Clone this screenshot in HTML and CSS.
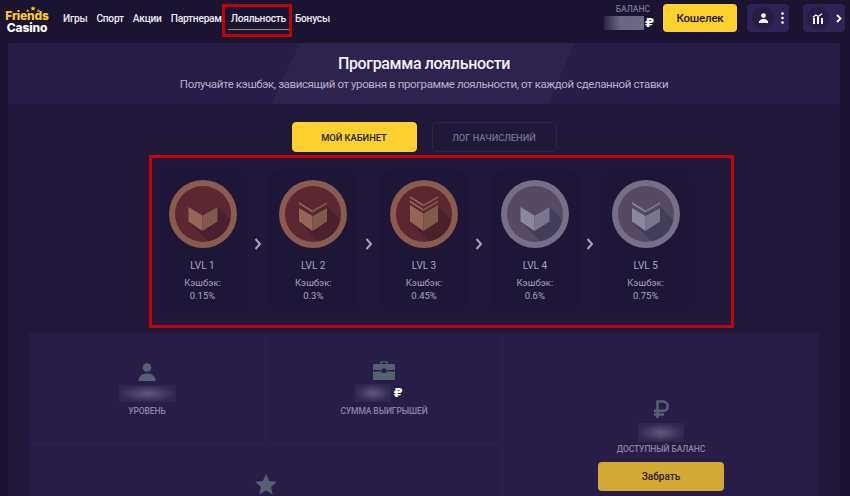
FILE: index.html
```html
<!DOCTYPE html>
<html lang="ru">
<head>
  <meta charset="UTF-8" />
  <title>Friends Casino</title>
  <link rel="stylesheet" href="styles.css">
</head>
<body>
  <svg class="sprite" aria-hidden="true">
    <defs>
      <clipPath id="face-clip"><circle r="28"/></clipPath>
      <symbol id="badge-base" viewBox="-34 -34 68 68">
        <circle class="rim" r="34"/>
        <circle class="face" r="28"/>
        <polygon class="shade" points="14.5,-7 42,20 20,42 -14.5,7.5" clip-path="url(#face-clip)"/>
      </symbol>
    </defs>
  </svg>

  <header class="topbar">
    <a class="logo">
      <svg class="logo-stars" viewBox="0 0 24 9"><path d="M4 5l.7 1.5 1.6.2-1.2 1 .3 1.3-1.4-.8-1.4.8.3-1.3-1.2-1 1.6-.2zM12 0l1.1 2.4 2.6.3-1.9 1.8.5 2.5-2.3-1.3-2.3 1.3.5-2.5-1.9-1.8 2.6-.3zM20 5l.7 1.5 1.6.2-1.2 1 .3 1.3-1.4-.8-1.4.8.3-1.3-1.2-1 1.6-.2z"/></svg>
      <span class="logo-top">Friends</span>
      <span class="logo-bottom">Casino</span>
    </a>
    <nav class="nav">
      <a>Игры</a>
      <a>Спорт</a>
      <a>Акции</a>
      <a>Партнерам</a>
      <a class="active">Лояльность</a>
      <a>Бонусы</a>
    </nav>
    <div class="balance">
      <span class="balance-label">БАЛАНС</span>
      <span class="balance-value"><i class="blur blur-head"></i><b class="rub">₽</b></span>
    </div>
    <button class="wallet">Кошелек</button>
    <button class="square-btn">
      <span class="round">
        <svg width="11" height="10" viewBox="0 0 11 10"><circle cx="5.5" cy="2.6" r="2.4"/><path d="M.8 10c0-2.8 2-4 4.700-4s4.700 1.200 4.700 4z"/></svg>
      </span>
      <svg class="more" width="3" height="12" viewBox="0 0 3 12"><circle cx="1.500" cy="1.500" r="1.300"/><circle cx="1.500" cy="6" r="1.300"/><circle cx="1.500" cy="10.500" r="1.300"/></svg>
    </button>
    <button class="square-btn last">
      <span class="round">
        <svg width="12" height="11" viewBox="0 0 12 11"><path d="M1 5h2v6H1zM5 4h2v7H5zM9 5h2v6H9z"/><path class="line" d="M.8 4.500 3.800 2l2.400 1.400L10 .8"/></svg>
      </span>
      <svg class="chev" width="6" height="9" viewBox="0 0 6 9"><path d="M1 1l3.500 3.500L1 8"/></svg>
    </button>
    <span class="mark mark-nav"></span>
  </header>

  <main class="page">
    <section class="hero">
      <h1>Программа лояльности</h1>
      <p>Получайте кэшбэк, зависящий от уровня в программе лояльности, от каждой сделанной ставки</p>
    </section>

    <div class="tabs">
      <button class="tab tab-on">МОЙ КАБИНЕТ</button>
      <button class="tab">ЛОГ НАЧИСЛЕНИЙ</button>
    </div>

    <section class="levels">
      <span class="mark mark-levels"></span>

      <article class="level bronze">
        <svg class="badge" viewBox="-34 -34 68 68">
          <use href="#badge-base" x="-34" y="-34" width="68" height="68"/>
          <path class="sh-l" d="M-14.500-7-.5 1.500V17L-14.500 7.500z"/>
          <path class="sh-r" d="M14.500-7-.5 1.500V17L14.500 7.500z"/>
        </svg>
        <h3>LVL 1</h3>
        <p>Кэшбэк:<br>0.15%</p>
      </article>
      <svg class="next" width="8" height="12" viewBox="0 0 8 12"><path d="M1.500 1l4.500 5-4.500 5"/></svg>

      <article class="level bronze">
        <svg class="badge" viewBox="-34 -34 68 68">
          <use href="#badge-base" x="-34" y="-34" width="68" height="68"/>
          <path class="sh-l" d="M-14-12-.5-3.500V-1.500L-14-10zM-14-6-.5 2V17L-14 7.500z"/>
          <path class="sh-r" d="M14-12-.5-3.500V-1.500L14-10zM14-6-.5 2V17L14 7.500z"/>
        </svg>
        <h3>LVL 2</h3>
        <p>Кэшбэк:<br>0.3%</p>
      </article>
      <svg class="next" width="8" height="12" viewBox="0 0 8 12"><path d="M1.500 1l4.500 5-4.500 5"/></svg>

      <article class="level bronze">
        <svg class="badge" viewBox="-34 -34 68 68">
          <use href="#badge-base" x="-34" y="-34" width="68" height="68"/>
          <path class="sh-l" d="M-14-18-.5-9.500V-7.500L-14-16zM-14-13.500-.5-5V-3L-14-11.500zM-14-9-.5-.5V17L-14 7.500z"/>
          <path class="sh-r" d="M14-18-.5-9.500V-7.500L14-16zM14-13.500-.5-5V-3L14-11.500zM14-9-.5-.5V17L14 7.500z"/>
        </svg>
        <h3>LVL 3</h3>
        <p>Кэшбэк:<br>0.45%</p>
      </article>
      <svg class="next" width="8" height="12" viewBox="0 0 8 12"><path d="M1.500 1l4.500 5-4.500 5"/></svg>

      <article class="level silver">
        <svg class="badge" viewBox="-34 -34 68 68">
          <use href="#badge-base" x="-34" y="-34" width="68" height="68"/>
          <path class="sh-l" d="M-14.500-7-.5 1.500V17L-14.500 7.500z"/>
          <path class="sh-r" d="M14.500-7-.5 1.500V17L14.500 7.500z"/>
        </svg>
        <h3>LVL 4</h3>
        <p>Кэшбэк:<br>0.6%</p>
      </article>
      <svg class="next" width="8" height="12" viewBox="0 0 8 12"><path d="M1.500 1l4.500 5-4.500 5"/></svg>

      <article class="level silver">
        <svg class="badge" viewBox="-34 -34 68 68">
          <use href="#badge-base" x="-34" y="-34" width="68" height="68"/>
          <path class="sh-l" d="M-14-12-.5-3.500V-1.500L-14-10zM-14-6-.5 2V17L-14 7.500z"/>
          <path class="sh-r" d="M14-12-.5-3.500V-1.500L14-10zM14-6-.5 2V17L14 7.500z"/>
        </svg>
        <h3>LVL 5</h3>
        <p>Кэшбэк:<br>0.75%</p>
      </article>
    </section>

    <section class="stats">
      <div class="stat stat-a">
        <svg class="icon" width="18" height="18" viewBox="0 0 18 18"><circle cx="9" cy="4.500" r="4.300"/><path d="M.5 18c0-5 3.500-7.500 8.500-7.500s8.500 2.500 8.500 7.500z"/></svg>
        <i class="blur blur-level"></i>
        <span class="stat-label">УРОВЕНЬ</span>
      </div>
      <div class="stat stat-b">
        <svg class="icon" width="22" height="19" viewBox="0 0 22 19"><path d="M7 3V1.500A1.300 1.300 0 0 1 8.300.2h5.400A1.300 1.300 0 0 1 15 1.500V3h-1.400V1.600H8.400V3z"/><path d="M1.500 3h19A1.500 1.500 0 0 1 22 4.500V9H13V7.500H9V9H0V4.500A1.500 1.500 0 0 1 1.500 3zM0 10.500h9V12h4v-1.500h9v7A1.500 1.500 0 0 1 20.500 19h-19A1.500 1.500 0 0 1 0 17.500z"/></svg>
        <span class="stat-value"><i class="blur blur-sum"></i><b class="rub">₽</b></span>
        <span class="stat-label">СУММА ВЫИГРЫШЕЙ</span>
      </div>
      <div class="stat stat-c">
        <svg class="icon" width="22" height="21" viewBox="0 0 22 21"><path d="M11 0l3.200 7 7.600.8-5.700 5.100 1.600 7.500L11 16.600l-6.700 3.800 1.600-7.500L.2 7.800 7.800 7z"/></svg>
      </div>
      <div class="stat stat-d">
        <svg class="icon-rub" width="16" height="19" viewBox="0 0 16 19"><path d="M4.500 18V1.500h5.500a4.700 4.700 0 0 1 0 9.400H1M1 14.500h10"/></svg>
        <i class="blur blur-avail"></i>
        <span class="stat-label">ДОСТУПНЫЙ БАЛАНС</span>
        <button class="take">Забрать</button>
      </div>
    </section>
  </main>
</body>
</html>
```

FILE: styles.css
```css
html, body {
  margin: 0;
  padding: 0;
  height: 496px;
  overflow: hidden;
  background-color: #191330;
  color: #fff;
  font-family: "Roboto", "Noto Sans", sans-serif;
}

.sprite {
  position: absolute;
  width: 0;
  height: 0;
}

button {
  font-family: inherit;
  border: none;
  cursor: pointer;
}

/* top bar */
.topbar {
  position: relative;
  display: flex;
  align-items: flex-start;
  height: 43px;
  box-sizing: border-box;
  background-color: #1b1430;
}

.logo {
  position: relative;
  display: flex;
  flex-direction: column;
  align-items: center;
  width: 44px;
  margin: 10px 0 0 5px;
  font-family: "Inter", sans-serif;
  font-weight: 800;
  line-height: 12px;
}

.logo-stars {
  position: absolute;
  top: -5px;
  left: 20px;
  width: 16px;
  height: 8px;
  fill: #ffc82a;
}

.logo-top {
  color: #ffc82a;
  font-size: 12px;
  letter-spacing: -0.2px;
}

.logo-bottom {
  color: #fff;
  font-size: 12px;
  letter-spacing: -0.1px;
}

.nav {
  display: flex;
  gap: 9px;
  margin: 12px 0 0 14px;
  font-size: 10.200px;
  font-weight: 500;
  letter-spacing: -0.25px;
  line-height: 13px;
  color: #eeeaf5;
}

.nav a.active {
  position: relative;
}

.nav a.active::after {
  content: "";
  position: absolute;
  left: -3px;
  right: -3px;
  top: 17px;
  height: 1px;
  background-color: #9d8a66;
}

.balance {
  display: flex;
  flex-direction: column;
  align-items: flex-end;
  margin: 4px 0 0 auto;
  width: 52px;
}

.balance-label {
  font-size: 8.500px;
  line-height: 11px;
  color: #77738d;
  font-weight: 500;
}

.balance-value {
  display: flex;
  align-items: center;
  gap: 1px;
  margin-top: 1px;
  margin-right: -4px;
}

.rub {
  font-family: "DejaVu Sans", sans-serif;
  font-size: 13px;
  font-weight: 700;
  line-height: 14px;
  color: #fff;
  font-style: normal;
}

.blur {
  display: block;
  background: radial-gradient(closest-side, #645580, #30264f);
}

.blur-head {
  width: 40px;
  height: 14px;
  background: linear-gradient(90deg, #2c2544, #6b6780 40%, #6f6a82);
}

.wallet {
  width: 74px;
  height: 28px;
  margin: 4px 0 0 13px;
  border-radius: 4px;
  background-color: #ffd02e;
  color: #1d1a26;
  font-size: 11.500px;
  font-weight: 500;
  letter-spacing: -0.2px;
}

.square-btn {
  display: flex;
  align-items: center;
  flex: none;
  width: 42px;
  height: 28px;
  margin: 4px 0 0 10px;
  padding: 0 0 0 5px;
  border-radius: 4px;
  background-color: #2d2355;
  box-sizing: border-box;
}

.square-btn.last {
  margin-left: 14px;
  margin-right: 5px;
  padding-left: 4px;
}

.round {
  display: flex;
  align-items: center;
  justify-content: center;
  width: 22px;
  height: 22px;
  border-radius: 50%;
  background-color: #251c47;
  fill: #fff;
}

.round .line {
  fill: none;
  stroke: #fff;
  stroke-width: 1.200;
}

.more {
  margin-left: 7px;
  fill: #fff;
}

.chev {
  margin-left: 7px;
  fill: none;
  stroke: #fff;
  stroke-width: 1.800;
}

/* red annotation frames */
.mark {
  position: absolute;
  box-sizing: border-box;
  border: 3px solid #c40008;
  pointer-events: none;
}

.mark-nav {
  left: 222px;
  top: 4px;
  width: 70px;
  height: 33px;
}

.mark-levels {
  left: -10px;
  top: -15px;
  width: 585px;
  height: 173px;
}

/* page */
.page {
  width: 832px;
  margin-left: 8px;
  height: 453px;
  overflow: hidden;
  display: flex;
  flex-direction: column;
  align-items: center;
  background-color: #201839;
}

.hero {
  position: relative;
  align-self: stretch;
  flex: none;
  height: 61px;
  margin-bottom: 1px;
  text-align: center;
  border-radius: 3px;
  background-color: #271d47;
}

/* slanted lighter band behind the heading */
.hero::before {
  content: "";
  position: absolute;
  left: 263px;
  top: 0;
  bottom: 0;
  width: 304px;
  background-color: #2e234f;
  clip-path: polygon(29px 0, 100% 0, 277px 100%, 0 100%);
}

.hero h1, .hero p {
  position: relative;
}

.hero h1 {
  margin: 11px 0 0;
  font-size: 16px;
  font-weight: 500;
  letter-spacing: -0.35px;
  line-height: 20px;
  color: #f2f0f7;
}

.hero p {
  margin: 3px 0 0;
  font-size: 11.500px;
  letter-spacing: -0.4px;
  line-height: 15px;
  color: #b7b2c8;
}

.tabs {
  display: flex;
  flex: none;
  gap: 15px;
  margin-top: 17px;
}

.tab {
  width: 125px;
  height: 30px;
  padding: 0;
  border-radius: 4px;
  border: 1px solid #2c2548;
  background-color: #1f1838;
  color: #73708b;
  font-size: 9.300px;
  font-weight: 500;
}

.tab-on {
  border-color: #ffd02e;
  background-color: #ffd02e;
  color: #211c2e;
}

/* levels */
.levels {
  position: relative;
  display: flex;
  flex: none;
  align-items: flex-start;
  margin-top: 18px;
  width: 531px;
  height: 143px;
}

.level {
  width: 88px;
  height: 143px;
  flex: none;
  box-sizing: border-box;
  padding-top: 10px;
  border-radius: 14px;
  background-color: #1d1637;
  text-align: center;
}

.badge {
  display: block;
  width: 68px;
  height: 68px;
  margin: 0 auto;
}

.level h3 {
  margin: 12px 0 0;
  font-size: 10px;
  font-weight: 400;
  line-height: 12px;
  color: #a9a5bb;
}

.level p {
  margin: 4px 0 0;
  font-size: 9.500px;
  line-height: 13px;
  color: #a9a5bb;
}

.bronze {
  --rim: #8a5b4f;
  --face: #5d2633;
  --shade: #4a1f2e;
  --sh-l: #966558;
  --sh-r: #84584d;
}

.silver {
  --rim: #757087;
  --face: #564a62;
  --shade: #423e56;
  --sh-l: #8b879d;
  --sh-r: #7a768d;
}

.rim { fill: var(--rim); }
.face { fill: var(--face); }
.shade { fill: var(--shade); }
.sh-l { fill: var(--sh-l); }
.sh-r { fill: var(--sh-r); }

.next {
  flex: none;
  width: 8px;
  margin: 68px 7.400px 0;
  fill: none;
  stroke: #a7a3b8;
  stroke-width: 2;
}

/* stats */
.stats {
  display: grid;
  flex: none;
  grid-template-columns: 237px 237px 316px;
  grid-template-rows: 111px 52px;
  width: 790px;
  height: 163px;
  overflow: hidden;
  margin-top: 20px;
  background-color: #271d47;
}

.stat {
  display: flex;
  flex-direction: column;
  align-items: center;
  box-sizing: border-box;
}

.stat-a {
  padding-top: 30px;
  border-right: 1px solid #2c2250;
  border-bottom: 1px solid #2c2250;
}

.stat-b {
  padding-top: 28px;
  border-right: 1px solid #2c2250;
  border-bottom: 1px solid #2c2250;
}

.stat-c {
  grid-column: 1 / 3;
  padding-top: 30px;
  border-right: 1px solid #2c2250;
}

.stat-d {
  grid-column: 3;
  grid-row: 1 / 3;
  padding-top: 67px;
}

.icon {
  display: block;
  fill: #56606f;
  flex: none;
}

.icon-rub {
  display: block;
  flex: none;
  fill: none;
  stroke: #56606f;
  stroke-width: 2.600;
}

.blur-level {
  width: 57px;
  height: 17px;
  margin-top: 4px;
}

.stat-value {
  display: flex;
  align-items: center;
  gap: 2px;
  margin-top: 4px;
  margin-right: 10px;
}

.blur-sum {
  width: 36px;
  height: 18px;
}

.blur-avail {
  width: 46px;
  height: 19px;
  margin-top: 4px;
}

.stat-label {
  margin-top: 4px;
  font-size: 8.500px;
  font-weight: 500;
  letter-spacing: -0.1px;
  line-height: 11px;
  color: #8a86a2;
}

.stat-d .stat-label {
  margin-top: 2px;
}

.take {
  width: 126px;
  height: 29px;
  margin-top: 7px;
  border-radius: 4px;
  background-color: #d2a932;
  color: #1f1a24;
  font-size: 10px;
  font-weight: 500;
}
```
